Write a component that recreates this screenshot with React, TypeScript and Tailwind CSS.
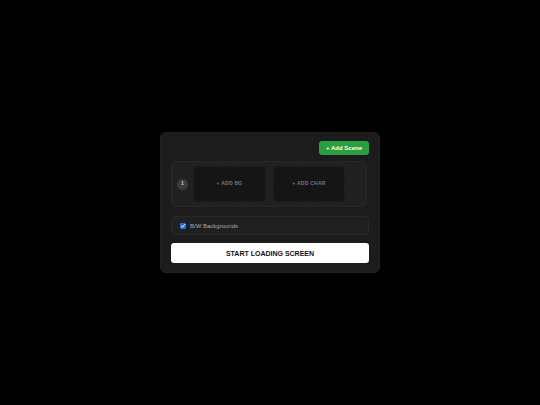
import React from "react";

export default function App() {
  const font = { fontFamily: '"Liberation Sans", Arial, sans-serif' };
  return (
    <div
      className="w-[540px] h-[405px] bg-black flex items-center justify-center"
      style={font}
    >
      <div className="w-[220px] h-[141px] bg-[#1c1c1c] rounded-[6px] border border-[#212121] px-[10px] pt-[8px] pb-[8px] flex flex-col">
        <div className="flex justify-end">
          <button className="h-[14px] w-[50px] bg-[#28a03f] rounded-[3px] text-white font-bold text-[6px] leading-none flex items-center justify-center">
            + Add Scene
          </button>
        </div>
        <div className="mt-[6px] h-[46px] w-[196px] bg-[#212121] border border-[#282828] rounded-[4px] flex items-center pl-[5px]">
          <div className="w-[11px] h-[11px] rounded-full bg-[#3b3b3b] text-[#cfcfcf] text-[5px] font-bold flex items-center justify-center">
            1
          </div>
          <div className="ml-[5px] w-[73px] h-[36px] bg-[#151515] border border-dashed border-[#232323] rounded-[3px] flex items-center justify-center text-[5px] font-bold tracking-[0.25px] text-[#777777]">
            + ADD BG
          </div>
          <div className="ml-[7px] w-[72px] h-[36px] bg-[#151515] border border-dashed border-[#232323] rounded-[3px] flex items-center justify-center text-[5px] font-bold tracking-[0.25px] text-[#777777]">
            + ADD CHAR
          </div>
        </div>
        <div className="mt-[9px] h-[19px] w-[198px] bg-[#202020] border border-[#2a2a2a] rounded-[4px] flex items-center pl-[8px]">
          <input
            type="checkbox"
            defaultChecked
            className="w-[6px] h-[6px] m-0 accent-[#1a73e8]"
          />
          <span className="ml-[4px] text-[6px] text-[#a8a8a8] leading-none">
            B/W Backgrounds
          </span>
        </div>
        <button className="mt-[8px] h-[20px] w-[198px] bg-white rounded-[3px] text-[#111111] font-bold text-[7px] leading-none flex items-center justify-center">
          START LOADING SCREEN
        </button>
      </div>
    </div>
  );
}
